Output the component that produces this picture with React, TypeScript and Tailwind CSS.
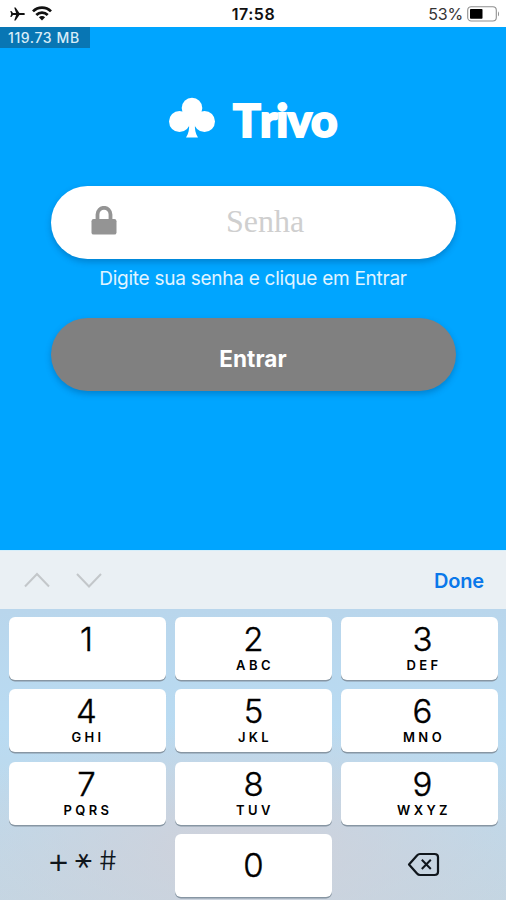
import { useState } from 'react';
import clsx from 'clsx';

interface KeyDef {
  digit: string;
  letters: string;
}

const KEYS: KeyDef[] = [
  { digit: '1', letters: '' },
  { digit: '2', letters: 'ABC' },
  { digit: '3', letters: 'DEF' },
  { digit: '4', letters: 'GHI' },
  { digit: '5', letters: 'JKL' },
  { digit: '6', letters: 'MNO' },
  { digit: '7', letters: 'PQRS' },
  { digit: '8', letters: 'TUV' },
  { digit: '9', letters: 'WXYZ' },
];

function PlaneIcon() {
  return (
    <svg className="w-[15px] h-[14px]" viewBox="0 0 15 14" fill="#111">
      <path d="M15 7c0-.7-.8-1.1-1.8-1.1H9.4L5.6.5H4.2l1.9 5.4H3L1.4 4H.3l.9 3-.9 3h1.1L3 8.100h3.100L4.200 13.500h1.400l3.800-5.400h3.800C14.200 8.100 15 7.700 15 7z" />
    </svg>
  );
}

function WifiIcon() {
  return (
    <svg className="w-[20px] h-[15px]" viewBox="0 0 20 15" fill="none" stroke="#111" strokeWidth="2.700">
      <path d="M1 5.400a12.700 12.700 0 0 1 18 0" />
      <path d="M4.300 9a8 8 0 0 1 11.400 0" />
      <path d="M10 14.500l-3.100-3.200a4.400 4.400 0 0 1 6.200 0z" fill="#111" stroke="none" />
    </svg>
  );
}

function BatteryIcon() {
  return (
    <svg className="w-[33px] h-[16px]" viewBox="0 0 33 16" fill="none">
      <rect x="0.700" y="0.700" width="28.600" height="14.300" rx="3.500" stroke="#8f8f8f" strokeWidth="1.100" />
      <rect x="3" y="3" width="12.500" height="9.700" rx="0.800" fill="#000" />
      <path d="M31 5.500c1.300.5 1.300 4.300 0 4.800z" fill="#8f8f8f" />
    </svg>
  );
}

function StatusBar() {
  return (
    <header className="grid h-[27px] grid-cols-3 items-center bg-white">
      <div className="flex items-center gap-[7px] pl-[10px]">
        <PlaneIcon />
        <WifiIcon />
      </div>
      <span className="pt-[1px] pl-[1px] text-center text-[16px] leading-none font-semibold tracking-[0.5px] text-[#111]">17:58</span>
      <div className="flex items-center justify-end gap-[4px] pr-[6px]">
        <span className="pt-[1px] text-[16px] leading-none tracking-[-0.2px] text-[#333]">53%</span>
        <BatteryIcon />
      </div>
    </header>
  );
}

function ClubIcon() {
  return (
    <svg className="h-[42px] w-[48px]" viewBox="0 0 48 42" fill="#fff">
      <circle cx="24" cy="11" r="10.300" />
      <circle cx="11.500" cy="24.500" r="10.500" />
      <circle cx="36.500" cy="24.500" r="10.500" />
      <path d="M17 14h14v14H17z" />
      <path d="M21 27h6c-.5 5 .5 10 3 13.500H18c2.500-3.500 3.500-8.500 3-13.500z" />
    </svg>
  );
}

function LockIcon() {
  return (
    <svg className="h-[30px] w-[26px]" viewBox="0 0 26 30">
      <path d="M6.500 15V8.500a6.500 6.700 0 0 1 13 0V15" fill="none" stroke="#949494" strokeWidth="3.800" />
      <rect x="0.500" y="13" width="25" height="15.600" rx="2.200" fill="#949494" />
    </svg>
  );
}

function DeleteIcon() {
  return (
    <svg className="h-[25px] w-[33px]" viewBox="0 0 33 25" fill="none" stroke="#10161c" strokeWidth="2.200" strokeLinejoin="round">
      <path d="M2 12.500L10 3.500Q11.300 2 13 2H27.500Q31 2 31 5V20Q31 23 27.500 23H13Q11.300 23 10 21.500Z" />
      <path d="M14.800 7.800l9 9.200M23.800 7.800l-9 9.200" strokeWidth="2" />
    </svg>
  );
}

function Key({ digit, letters, onPress }: KeyDef & { onPress: (d: string) => void }) {
  const isZero = digit === '0';
  // last column labels sit slightly right of centre, first column slightly left
  const column = isZero ? 1 : (Number(digit) - 1) % 3;
  return (
    <button
      className={clsx(
        'flex h-[63px] flex-col items-center rounded-[6px] bg-white text-black shadow-[0_1.5px_0_#8796a3]',
        isZero ? 'pt-[14px]' : 'pt-[5px]',
        column === 0 && 'pr-[2px]',
        column === 2 && 'pl-[6px]',
      )}
      onClick={() => onPress(digit)}
    >
      <span className="text-[33px] leading-[34px] font-[360] [-webkit-text-stroke:0.4px_black]">{digit}</span>
      {letters && <span className="mt-[1px] pl-[3px] text-[13px] leading-[17px] font-semibold tracking-[3.4px]">{letters}</span>}
    </button>
  );
}

export default function App() {
  const [password, setPassword] = useState('');

  const handlePress = (d: string) => setPassword((p) => p + d);

  return (
    <div className="flex h-[900px] w-[506px] flex-col overflow-hidden bg-[#00a5ff] font-['Inter','Liberation_Sans',sans-serif]">
      <StatusBar />

      <main className="flex h-[523px] flex-col">
        <div className="flex h-[21px] w-[90px] items-center bg-[#0876b4] pl-[8px] text-[14px] leading-none font-medium tracking-[0.6px] text-[#d8edf8]">
          119.73 MB
        </div>

        {/* Logo */}
        <div className="mt-[49px] flex h-[44px] pl-[168px]">
          <ClubIcon />
          <span className="ml-[17px] h-[46px] font-['Lato',sans-serif] text-[46px] leading-[45px] font-black tracking-[-0.9px] text-white [font-kerning:none] [-webkit-text-stroke:2px_white]">
            Trivo
          </span>
        </div>

        {/* Form */}
        <form className="mx-[51px] mt-[45px] flex flex-col items-center" onSubmit={(e) => e.preventDefault()}>
          <label className="flex h-[73px] w-[405px] items-center rounded-full bg-white pr-[40px] pb-[3px] pl-[40px] shadow-[0_3px_6px_rgba(0,50,100,0.3)]">
            <LockIcon />
            <input
              type="password"
              value={password}
              onChange={(e) => setPassword(e.target.value)}
              placeholder="Senha"
              className="ml-[17px] w-[263px] bg-transparent text-center font-['Liberation_Serif',serif] text-[32px] outline-none placeholder:text-[#cfcfcf]"
            />
          </label>
          <p className="mt-[8px] text-[19px] leading-[24px] tracking-[-0.26px] whitespace-nowrap text-[#e0f4ff]">
            Digite sua senha e clique em Entrar
          </p>
          <button className="mt-[27px] h-[73px] w-[405px] rounded-full bg-[#808080] pt-[8px] text-[22.5px] font-bold tracking-[0.1px] text-white shadow-[0_3px_6px_rgba(0,50,100,0.3)]">
            Entrar
          </button>
        </form>
      </main>

      {/* Keyboard toolbar */}
      <div className="flex h-[59px] items-center border-t border-[#d5eefa] bg-[#eaf0f4] pr-[22px] pl-[24px]">
        <svg className="h-[16px] w-[80px]" viewBox="0 0 80 16" fill="none" stroke="#c3c7ca" strokeWidth="2">
          <path d="M1 14.500L13 2L25 14.500" />
          <path d="M53 2L65 14.500L77 2" />
        </svg>
        <button className="ml-auto pt-[1px] text-[20px] font-semibold tracking-[-0.2px] text-[#0a78ea]">Done</button>
      </div>

      {/* Keypad */}
      <div className="grid flex-1 grid-cols-[157px_157px_157px] content-start gap-x-[9px] gap-y-[9.4px] bg-[radial-gradient(ellipse_60%_45%_at_48%_82%,#d0d1da_0%,#d0d1da00_100%),linear-gradient(180deg,#b9d6ec_0%,#b9dbf2_40%,#c4d6e3_100%)] pt-[8px] pl-[9px]">
        {KEYS.map((k) => (
          <Key key={k.digit} {...k} onPress={handlePress} />
        ))}
        <button className="flex h-[63px] items-center justify-center pr-[10px] pb-[9px] text-[#10161c]">
          <span className="flex w-[24px] justify-center pb-[3px] text-[36px] leading-[32px] font-light">+</span>
          <span className="flex w-[26px] justify-center pb-[5px] font-['DejaVu_Sans'] text-[28px] leading-[28px]">⚹</span>
          <span className="flex w-[22px] -skew-x-[-5deg] justify-center text-[27px] leading-[28px] font-light">#</span>
        </button>
        <Key digit="0" letters="" onPress={handlePress} />
        <button
          className="flex h-[63px] items-center justify-center pb-[3px] pl-[7px]"
          onClick={() => setPassword((p) => p.slice(0, -1))}
        >
          <DeleteIcon />
        </button>
      </div>
    </div>
  );
}
